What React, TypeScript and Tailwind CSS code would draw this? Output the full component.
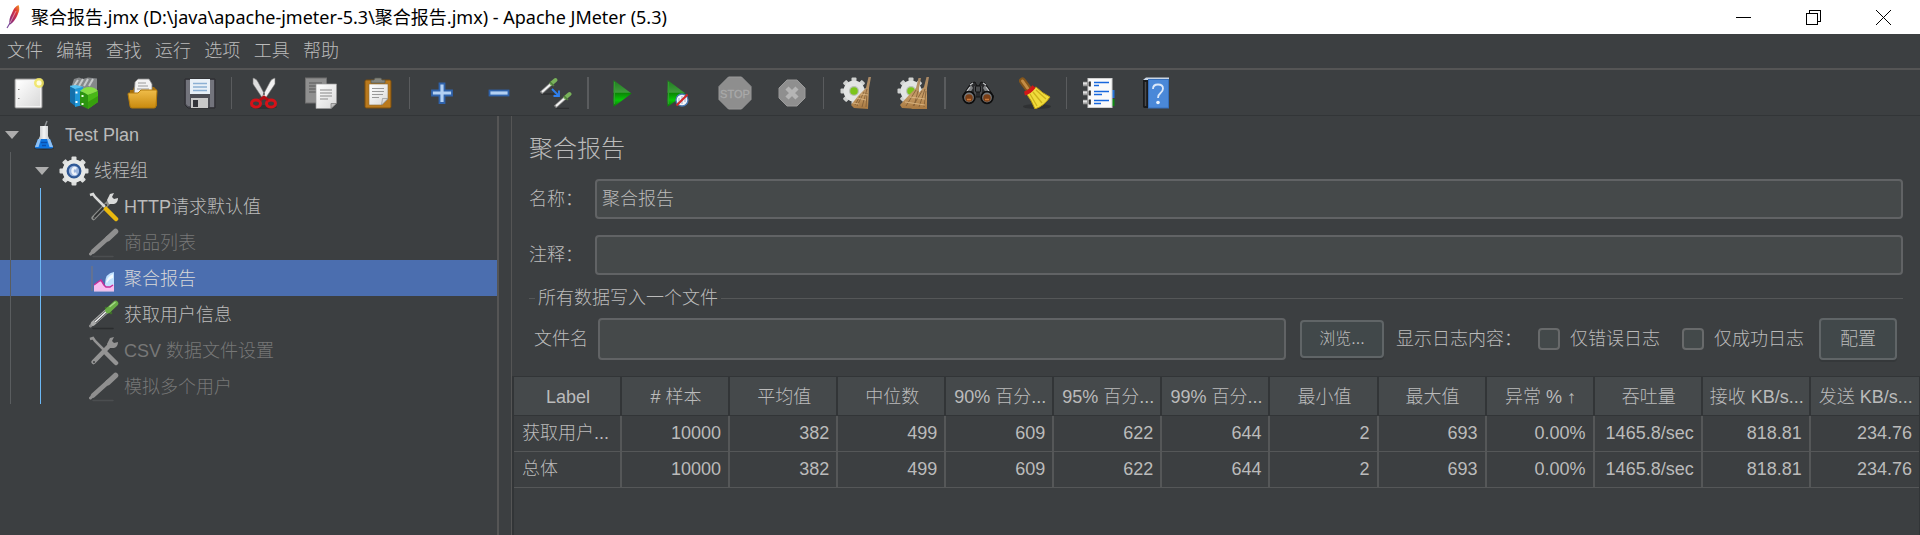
import React from "react";

type IconProps = { children: React.ReactNode; size?: string; box?: string };

function Icon({ children, size = "size-8", box = "0 0 32 32" }: IconProps) {
  return (
    <svg viewBox={box} className={`${size} shrink-0`} fill="none" aria-hidden="true">
      {children}
    </svg>
  );
}

function Gradients() {
  return (
    <svg className="absolute size-0" aria-hidden="true">
      <defs>
        <linearGradient id="paper" x1="0" y1="0" x2="1" y2="1">
          <stop offset="0" stopColor="#fff" />
          <stop offset="1" stopColor="#d9d9d9" />
        </linearGradient>
        <linearGradient id="gold" x1="0" y1="0" x2="0" y2="1">
          <stop offset="0" stopColor="#f0bd4a" />
          <stop offset="1" stopColor="#c98a0e" />
        </linearGradient>
        <linearGradient id="play" x1="0" y1="0" x2="0" y2="1">
          <stop offset="0" stopColor="#1d7c1d" />
          <stop offset="0.45" stopColor="#3f9a3c" />
          <stop offset="0.5" stopColor="#0a8a05" />
          <stop offset="0.75" stopColor="#08c808" />
          <stop offset="1" stopColor="#0f6d0c" />
        </linearGradient>
        <linearGradient id="straw" x1="0" y1="0" x2="0" y2="1">
          <stop offset="0" stopColor="#a88865" />
          <stop offset="0.6" stopColor="#c59a63" />
          <stop offset="1" stopColor="#a87840" />
        </linearGradient>
        <linearGradient id="quill" x1="1" y1="0" x2="0" y2="1">
          <stop offset="0" stopColor="#f59a23" />
          <stop offset="0.35" stopColor="#d9333a" />
          <stop offset="0.7" stopColor="#a22a6b" />
          <stop offset="1" stopColor="#6b3a8c" />
        </linearGradient>
        <linearGradient id="glass" x1="0" y1="0" x2="1" y2="0">
          <stop offset="0" stopColor="#9b9fa3" />
          <stop offset="0.5" stopColor="#f4f5f6" />
          <stop offset="1" stopColor="#a7abaf" />
        </linearGradient>
      </defs>
    </svg>
  );
}

const NewIcon = () => (
  <Icon>
    <rect x="2" y="2" width="27" height="29" rx="1" fill="#f4f4f4" stroke="#8e8e8e" />
    <rect x="4" y="4" width="23" height="25" fill="url(#paper)" />
    <path d="M5 12.500h1.500M5 21.500h1.500" stroke="#888" />
    <circle cx="26" cy="6" r="5" fill="#f1e55c" fillOpacity="0.85" />
    <circle cx="26" cy="6" r="2.500" fill="#fffde0" />
  </Icon>
);

const TemplatesIcon = () => (
  <Icon>
    <path d="M1 11L4 2l5-1.500 4 1.500 5-1.500 9 1v16H3z" fill="#85888a" />
    <path d="M4 9l4-6M9 9l4-7M14 9l4-7M19 9l4-7" stroke="#c6c9ca" strokeWidth="2" />
    <path d="M-1 9l6 2v18l-5-4z" fill="#1470ab" />
    <path d="M-1 9l7-1 8 2-9 2z" fill="#58c3f3" />
    <path d="M5 12l8-2v18l-8 2z" fill="#2098d8" />
    <path d="M6.500 14.500v2M6.500 24v2" stroke="#fff" strokeWidth="2" />
    <path d="M10 14l8 3v15l-8-4z" fill="#2c9410" />
    <path d="M10 14q4-4 9-4 6 0 9 4l-10 4q-4-3-8-4z" fill="#86df45" />
    <path d="M18 18l10-4v11l-10 7z" fill="#48b816" />
    <path d="M18 25l10-6v6l-10 7z" fill="#37a00d" />
    <path d="M12.500 18v2M12.500 26v2" stroke="#e9ffe0" strokeWidth="2" />
  </Icon>
);

const OpenIcon = () => (
  <Icon>
    <path d="M3 13h3l1-3h20l3 3v16H3z" fill="#a46d0a" />
    <path d="M8 5l3-3h11l3 5v11H7z" fill="#f2f2f2" stroke="#888" strokeWidth="0.800" />
    <path d="M11 6h8M11 9h10M10 12h12" stroke="#999" strokeWidth="1.200" />
    <path d="M1 17q0-1 1-1h9l3-3h15q1 0 1 1l-1 15q0 2-2 2H5q-2 0-2-2z" fill="url(#gold)" stroke="#b27a0c" />
  </Icon>
);

const SaveIcon = () => (
  <Icon>
    <path d="M1 2h30v29H4l-3-3z" fill="#4c4d54" stroke="#2a2b2e" />
    <path d="M2 3h4v26H4l-2-2zM26 3h4v27h-4z" fill="#73747c" />
    <rect x="6" y="2" width="20" height="15" fill="#e8f0f7" />
    <path d="M9 6.500h14M9 10h14M9 13.500h14" stroke="#8bb0d4" strokeWidth="1.500" />
    <rect x="7" y="21" width="17" height="10" fill="#c9c9c9" />
    <rect x="9" y="23" width="5" height="7" fill="#33343a" />
  </Icon>
);

const CutIcon = () => (
  <Icon>
    <ellipse cx="16" cy="30" rx="13" ry="2" fill="#26282a" fillOpacity="0.600" />
    <path d="M5 1q4 1 5 4l8 15-3 2L5 7z" fill="#dedede" stroke="#777" strokeWidth="0.600" />
    <path d="M27 1q-4 1-5 4l-8 15 3 2L27 7z" fill="#f1f1f1" stroke="#777" strokeWidth="0.600" />
    <ellipse cx="8" cy="26.500" rx="4.500" ry="3.500" stroke="#d71118" strokeWidth="3" />
    <ellipse cx="23" cy="26.500" rx="4.500" ry="3.500" stroke="#d71118" strokeWidth="3" />
    <path d="M12 23l4-3 4 3" stroke="#b40d12" strokeWidth="3" />
    <circle cx="16" cy="17" r="1" fill="#555" />
  </Icon>
);

const CopyIcon = () => (
  <Icon>
    <rect x="0.500" y="1" width="21" height="25" fill="#8f8f8f" stroke="#6f6f6f" />
    <path d="M4 6h13M4 9h13M4 12h8M4 15h8" stroke="#6c6c6c" strokeWidth="1.300" />
    <path d="M11 7h20.500v19l-5.500 5.500H11z" fill="url(#paper)" stroke="#999" strokeWidth="0.700" />
    <path d="M15 13h12M15 16h12M15 19h12M15 22h8" stroke="#aaa" strokeWidth="1.300" />
    <path d="M26 31.500v-5h5.500z" fill="#bdbdbd" stroke="#777" strokeWidth="0.700" />
  </Icon>
);

const PasteIcon = () => (
  <Icon>
    <rect x="3" y="3" width="26" height="28" rx="1.500" fill="#b9791d" stroke="#7d4f0c" />
    <path d="M7 7h19v15l-6 6H7z" fill="url(#paper)" stroke="#8a6b3a" strokeWidth="0.600" />
    <path d="M10 11.500h12M10 14.500h12M10 17.500h11M10 20.500h7" stroke="#999" strokeWidth="1.200" />
    <path d="M19.500 28l1-6.500h5.500z" fill="#ddd" stroke="#888" strokeWidth="0.600" />
    <path d="M9 6V3h3l1-2h6l1 2h3v3z" fill="#85867f" stroke="#55564f" strokeWidth="0.700" />
  </Icon>
);

const PlusIcon = () => (
  <Icon>
    <path d="M13.500 6.500h5v7h7.500v5h-7.500V26h-5v-7.500H6v-5h7.500z" fill="#b3d0f2" stroke="#2f62aa" strokeWidth="1.800" />
  </Icon>
);

const MinusIcon = () => (
  <Icon>
    <rect x="6.500" y="13.500" width="19" height="5" fill="#b3d0f2" stroke="#2f62aa" strokeWidth="1.800" />
  </Icon>
);

const ToggleIcon = () => (
  <Icon>
    <path d="M1 17h13M16 31.500h13" stroke="#2d2f31" strokeWidth="1.500" />
    <path d="M1 16l10-9" stroke="#8a8a8a" strokeWidth="3.500" />
    <path d="M2 15l9-8" stroke="#f4f4f4" strokeWidth="1.800" />
    <path d="M11.500 6.500L15.500 3" stroke="#79b25a" strokeWidth="4" strokeLinecap="round" />
    <path d="M10 5l4 4" stroke="#4f7d3a" strokeWidth="1.500" />
    <path d="M15 30l10-9" stroke="#8a8a8a" strokeWidth="3.500" />
    <path d="M16 29l9-8" stroke="#f4f4f4" strokeWidth="1.800" />
    <path d="M25.500 20.500L29.500 17" stroke="#79b25a" strokeWidth="4" strokeLinecap="round" />
    <path d="M24 19l4 4" stroke="#4f7d3a" strokeWidth="1.500" />
    <path d="M12 12l6 6" stroke="#2f80f0" strokeWidth="1.800" />
    <path d="M19 13.500v5.500h-5.500" stroke="#2f80f0" strokeWidth="1.800" />
  </Icon>
);

const PlayIcon = () => (
  <Icon>
    <path d="M8.500 3v27L26.500 16.500z" fill="url(#play)" />
    <path d="M9.500 5v22" stroke="#2fa02c" />
  </Icon>
);

const PlayNoPauseIcon = () => (
  <Icon>
    <path d="M5.500 3v27L23.500 16.500z" fill="url(#play)" />
    <path d="M6.500 5v22" stroke="#2fa02c" />
    <circle cx="20" cy="23" r="6" fill="#f4f6fa" stroke="#4a7bb5" strokeWidth="1.300" />
    <path d="M17 21v5M20 19v8M23 20v5" stroke="#a8bbd4" strokeWidth="1.200" />
    <path d="M14.500 28.500l11-11" stroke="#d02a2a" strokeWidth="2.200" />
  </Icon>
);

const StopIcon = () => (
  <Icon size="size-[34px]" box="0 0 34 34">
    <path d="M10.500 1h13L33 10.500v13L23.500 33h-13L1 23.500v-13z" fill="#8e8e8e" stroke="#999" />
    <text x="17" y="21.500" textAnchor="middle" className="font-['Liberation_Sans'] text-[11px] font-normal" fill="#a9a9a9" stroke="#a9a9a9" strokeWidth="0.300">
      STOP
    </text>
  </Icon>
);

const ShutdownIcon = () => (
  <Icon>
    <path d="M11 3h10l8 8v10l-8 8H11l-8-8V11z" fill="#8f8f8f" stroke="#9a9a9a" />
    <path d="M11 11l10 10M21 11L11 21" stroke="#b5b5b5" strokeWidth="4.500" />
  </Icon>
);

const gearTeeth = [0, 45, 90, 135, 180, 225, 270, 315];

function SmallGear() {
  return (
    <g>
      {gearTeeth.map((a) => (
        <rect key={a} x="11.500" y="0.500" width="5" height="7" rx="1" fill="#cfd1d0" transform={`rotate(${a} 14 14)`} />
      ))}
      <circle cx="14" cy="14" r="10.500" fill="#e2e4e3" />
      <circle cx="14" cy="14" r="5" fill="#b9bfb6" />
      <circle cx="14" cy="14" r="3.800" fill="#7cc41c" />
    </g>
  );
}

const ClearIcon = () => (
  <Icon>
    <SmallGear />
    <path d="M28.500 0H31l-2 11-1 21-14-1-3-3 7-9 8-8z" fill="url(#straw)" />
    <path d="M27 12l-5 18M24 15l-7 14M27 16l-1 14M20 19l-5 9" stroke="#7d5a33" strokeWidth="0.800" />
    <path d="M13 26l6 1M17 21l9 2M21 17l7 1" stroke="#e0bd8a" strokeWidth="0.800" />
  </Icon>
);

const ClearAllIcon = () => (
  <Icon>
    <SmallGear />
    <path d="M21.500 1H24l-2 10v21L5 31l-2-3 9-10 7-7z" fill="url(#straw)" />
    <path d="M29.500 0H32l-2 11v21H15l-3-4 8-10 7-8z" fill="url(#straw)" />
    <path d="M19 13L9 29M28 12l-6 18M25 14l-9 15M21 14l-4 15M29 14l-2 16" stroke="#7d5a33" strokeWidth="0.800" />
    <path d="M8 25l20 3M13 20l15 2" stroke="#e0bd8a" strokeWidth="0.800" />
  </Icon>
);

const SearchIcon = () => (
  <Icon>
    <path d="M0 20L5 12l4-6 4-1 2 4h2l2-4 4 1 4 6 5 8z" fill="#2a2b2d" stroke="#151617" />
    <path d="M4 15l5-7 2 3-3 5zM28 15l-5-7-2 3 3 5z" fill="#7f8183" />
    <path d="M8 8l3-2M24 8l-3-2M5 14l3-4M27 14l-3-4" stroke="#c3c5c7" strokeWidth="1.200" />
    <path d="M13 9v12M19 9v12" stroke="#55575a" strokeWidth="1.500" />
    <circle cx="7" cy="20.500" r="5.800" fill="#77797b" stroke="#0d0d0d" strokeWidth="1.800" />
    <circle cx="25" cy="20.500" r="5.800" fill="#77797b" stroke="#0d0d0d" strokeWidth="1.800" />
    <circle cx="7" cy="21" r="3.800" fill="#7a3f17" />
    <circle cx="25" cy="21" r="3.800" fill="#7a3f17" />
    <path d="M5 22.500h4M23 22.500h4" stroke="#c9793a" strokeWidth="1.500" />
    <rect x="13.500" y="9" width="5" height="6" rx="1" fill="#4a4c4e" stroke="#121313" />
  </Icon>
);

const BroomIcon = () => (
  <Icon>
    <ellipse cx="18" cy="29.500" rx="14" ry="2.500" fill="#26282a" fillOpacity="0.600" />
    <path d="M3.500 4l6 8" stroke="#84561c" strokeWidth="7" strokeLinecap="round" />
    <path d="M3.500 4l5 7" stroke="#c48d45" strokeWidth="3" strokeLinecap="round" />
    <path d="M7 16l10-6q6 6 14 10-6 9-15 12-3-8-9-16z" fill="#f0dc3c" stroke="#b99a10" />
    <path d="M11 17l7 12M14 15l9 11M17 13l10 9" stroke="#cdb21c" strokeWidth="1.300" />
    <path d="M5.500 16.500q5-1 9.500-7" stroke="#d01818" strokeWidth="4" />
  </Icon>
);

const FunctionIcon = () => (
  <Icon>
    <path d="M28 13h3.500v8H28z" fill="#2573d9" />
    <path d="M28 22h3.500v7H28z" fill="#0c8a12" />
    <rect x="5" y="1.500" width="24" height="29" fill="#fafafa" stroke="#cfcfcf" />
    <path d="M0 7h7M0 16h7M0 25h7" stroke="#9a9a9a" strokeWidth="4.500" />
    <path d="M0 6.500h4M0 15.500h4M0 24.500h4" stroke="#e0e0e0" strokeWidth="2" />
    <path d="M7 4.500v5M7 13.500v5M7 22.500v5" stroke="#111" strokeWidth="1.500" />
    <path d="M11 5.500h15M11 8.500h5M11 14.500h15M11 17.500h8M11 23.500h15M11 26.500h7" stroke="#1767dd" strokeWidth="1.700" />
  </Icon>
);

const HelpIcon = () => (
  <Icon>
    <path d="M3 3l3-2.500h23V3z" fill="#c9d6e6" />
    <path d="M3 3h6v28H4l-1-1z" fill="#191a1b" />
    <path d="M5.500 5v24" stroke="#4a4b4d" strokeWidth="1.500" />
    <rect x="8.500" y="2.500" width="20" height="28.500" fill="#4a88d8" stroke="#356fbc" />
    <path d="M13 12q0-4.500 5-4.500t5 4q0 2.500-2.500 4.500t-2.500 5" stroke="#dbe8f9" strokeWidth="1.800" />
    <circle cx="18" cy="25.500" r="1.800" fill="#eaf2fc" />
  </Icon>
);

const toolbar: { label: string; icon: React.ReactNode; disabled?: boolean }[][] = [
  [
    { label: "新建", icon: <NewIcon /> },
    { label: "模板", icon: <TemplatesIcon /> },
    { label: "打开", icon: <OpenIcon /> },
    { label: "保存", icon: <SaveIcon /> },
  ],
  [
    { label: "剪切", icon: <CutIcon /> },
    { label: "复制", icon: <CopyIcon /> },
    { label: "粘贴", icon: <PasteIcon /> },
  ],
  [
    { label: "全部展开", icon: <PlusIcon /> },
    { label: "全部折叠", icon: <MinusIcon /> },
    { label: "切换", icon: <ToggleIcon /> },
  ],
  [
    { label: "启动", icon: <PlayIcon /> },
    { label: "不停顿开始", icon: <PlayNoPauseIcon /> },
    { label: "停止", icon: <StopIcon />, disabled: true },
    { label: "关闭", icon: <ShutdownIcon />, disabled: true },
  ],
  [
    { label: "清除", icon: <ClearIcon /> },
    { label: "清除全部", icon: <ClearAllIcon /> },
  ],
  [
    { label: "查找", icon: <SearchIcon /> },
    { label: "重置搜索", icon: <BroomIcon /> },
  ],
  [
    { label: "函数助手", icon: <FunctionIcon /> },
    { label: "帮助", icon: <HelpIcon /> },
  ],
];

const treeIcon = "size-[30px]";

const FlaskIcon = () => (
  <Icon size={treeIcon} box="0 0 30 30">
    <ellipse cx="14" cy="28.500" rx="10" ry="1.500" fill="#2c2e30" />
    <path d="M15 6l2-5" stroke="#8f9396" strokeWidth="1.500" />
    <path d="M10 6h8v10l5 11q0 1-1 1H6q-1 0-1-1l5-11z" fill="url(#glass)" />
    <path d="M8 19h12l3 8q0 1.500-1.500 1.500H6.500Q5 28.500 5 27z" fill="#0e74e0" />
    <path d="M8 19h3l-2.500 8H5zM20 19l3 8h-3.500l-2.500-8z" fill="#8fc0f2" />
    <path d="M11 22.500h6M12 25.500h4" stroke="#0a4fae" strokeWidth="1.500" />
  </Icon>
);

const ThreadGroupIcon = () => (
  <Icon size={treeIcon} box="0 0 30 30">
    {gearTeeth.map((a) => (
      <rect key={a} x="12.500" y="0.500" width="5" height="7" rx="1" fill="#dcdedd" transform={`rotate(${a} 15 15)`} />
    ))}
    <circle cx="15" cy="15" r="11.500" fill="#e6e8e7" />
    <circle cx="15" cy="15" r="6.300" fill="#9db6de" stroke="#2f5896" strokeWidth="2.300" />
    <path d="M17.500 12.500q-4-1.500-4 2.500t4 2.500" stroke="#eef3fa" strokeWidth="2.500" />
  </Icon>
);

function ToolsIcon({ muted = false }: { muted?: boolean }) {
  const steel = muted ? "#949494" : "#d9dad9";
  const grip = muted ? "#949494" : "#eab90e";
  return (
    <Icon size={treeIcon} box="0 0 30 30">
      <path d="M4.500 26L20 10" stroke={muted ? "#949494" : "#8a8c8a"} strokeWidth="4.500" strokeLinecap="round" />
      {!muted && <path d="M6 24.500L17 13" stroke="#2e3031" strokeWidth="2" strokeLinecap="round" />}
      <path d="M20 12l-2-4 3-6 4-1-2 4 2 2 4-1q0 5-4 6z" fill={steel} />
      <path d="M1 3l3-1 2 3 10 10" stroke={steel} strokeWidth="2.500" />
      <path d="M17 17l10 10" stroke={grip} strokeWidth="4.500" strokeLinecap="round" />
      <circle cx="5" cy="26" r="1" fill="#3c3f41" />
    </Icon>
  );
}

function SamplerIcon({ muted = false }: { muted?: boolean }) {
  return (
    <Icon size={treeIcon} box="0 0 30 30">
      <path d="M4 28.500h20" stroke={muted ? "#4b4e50" : "#2b2d2f"} strokeWidth="1.500" strokeLinecap="round" />
      <path d="M1.500 26l3-3" stroke="#8f8f8f" strokeWidth="3" strokeLinecap="round" />
      <path d="M4 23.500L19 10" stroke={muted ? "#8f8f8f" : "#a9aaa9"} strokeWidth="4.500" strokeLinecap="round" />
      {!muted && <path d="M6 22L17 12" stroke="#3a3c3d" strokeWidth="2.800" />}
      {!muted && <path d="M6 22L18 11" stroke="#f2f2f2" strokeWidth="1.600" />}
      {!muted && <path d="M17 8l5 5" stroke="#3f6f2a" strokeWidth="2.500" strokeLinecap="round" />}
      <path d="M19 10.500l7.500-7" stroke={muted ? "#8f8f8f" : "#6aae46"} strokeWidth="5.500" strokeLinecap="round" />
      {!muted && <path d="M21 6.500l5-4" stroke="#a7d98a" strokeWidth="1.500" strokeLinecap="round" />}
    </Icon>
  );
}

const ReportIcon = () => (
  <Icon size={treeIcon} box="0 0 30 30">
    <path d="M3 2v25" stroke="#66738f" strokeWidth="1.800" />
    <path d="M16 20q0-11 9-12v17l-9 1z" fill="#bfe0ff" />
    <path d="M17 18q2-6 7-8v4q-4 1-6 5z" fill="#f1f8ff" />
    <path d="M5 27v-6l4-3 3-2 3 5 4 2 6-3v7z" fill="#f9bdf0" />
    <path d="M5 21l4-3 3-2 3 5 2 2 4 0 3-2" stroke="#c4309c" strokeWidth="1.500" />
    <path d="M5 27h20" stroke="#e3c3e8" strokeWidth="1.200" />
  </Icon>
);

function Arrow() {
  return (
    <svg viewBox="0 0 14 8" className="h-2 w-3.5 shrink-0" aria-hidden="true">
      <path d="M0 0h14L7 8z" fill="#adadad" />
    </svg>
  );
}

const leaves: { text: string; icon: React.ReactNode; state?: "off" | "selected" }[] = [
  { text: "HTTP请求默认值", icon: <ToolsIcon /> },
  { text: "商品列表", icon: <SamplerIcon muted />, state: "off" },
  { text: "聚合报告", icon: <ReportIcon />, state: "selected" },
  { text: "获取用户信息", icon: <SamplerIcon /> },
  { text: "CSV 数据文件设置", icon: <ToolsIcon muted />, state: "off" },
  { text: "模拟多个用户", icon: <SamplerIcon muted />, state: "off" },
];

const leafStyle = {
  normal: "",
  off: "text-[#777777]",
  selected: "bg-[#4b6eaf] text-[#d8d8d8]",
};

const treeRow = "flex h-9 items-center pt-0.5";

function Tree() {
  return (
    <nav aria-label="测试计划" className="w-[499px] shrink-0 border-r-2 border-[#555555]">
      <div className={`${treeRow} pl-[5px]`}>
        <Arrow />
        <span className="flex items-center gap-[5px] pl-[11px]">
          <FlaskIcon />
          Test Plan
        </span>
      </div>
      <div className="relative">
        <div className={`${treeRow} pl-[35px]`}>
          <Arrow />
          <span className="flex items-center gap-[5px] pl-[10px]">
            <ThreadGroupIcon />
            线程组
          </span>
        </div>
        <div className="relative">
          <ul>
            {leaves.map((leaf) => (
              <li key={leaf.text} className={`${treeRow} gap-[5px] pl-[89px] ${leafStyle[leaf.state ?? "normal"]}`}>
                {leaf.icon}
                {leaf.text}
              </li>
            ))}
          </ul>
          <span className="absolute inset-y-0 left-10 w-px bg-[#6cb8f5]" />
        </div>
        <span className="absolute inset-y-0 left-2.5 w-px bg-[#5a5d5f]" />
      </div>
    </nav>
  );
}

const columns = ["Label", "# 样本", "平均值", "中位数", "90% 百分...", "95% 百分...", "99% 百分...", "最小值", "最大值", "异常 % ↑", "吞吐量", "接收 KB/s...", "发送 KB/s..."];

const rows = [
  ["获取用户...", "10000", "382", "499", "609", "622", "644", "2", "693", "0.00%", "1465.8/sec", "818.81", "234.76"],
  ["总体", "10000", "382", "499", "609", "622", "644", "2", "693", "0.00%", "1465.8/sec", "818.81", "234.76"],
];

function ResultTable() {
  return (
    <div className="flex-1 border-r border-l-2 border-[#323537]">
      <table className="w-full table-fixed border-separate border-spacing-0">
        <thead>
          <tr>
            {columns.map((c) => (
              <th key={c} scope="col" className="h-10 border-y border-r-2 border-[#323537] bg-[#45494b] pt-0.5 pr-0 pb-0 pl-0.5 text-center font-light whitespace-nowrap last:border-r-0">
                {c}
              </th>
            ))}
          </tr>
        </thead>
        <tbody>
          {rows.map((row) => (
            <tr key={row[0]}>
              {row.map((cell, i) => (
                <td key={i} className="h-9 border-r-2 border-b border-[#555758] pt-0 pr-[7px] pb-0.5 pl-2 text-right whitespace-nowrap first:pr-0 first:text-left last:border-r-0">
                  {cell}
                </td>
              ))}
            </tr>
          ))}
        </tbody>
      </table>
    </div>
  );
}

const field = "min-w-0 flex-1 rounded-[4px] border-2 border-[#616365] bg-[#45494a] px-[5px] outline-none";
const button = "shrink-0 rounded-[4px] border-2 border-[#606567] bg-[#41484a] text-center shadow-[0_2px_0_#35383a]";
const check = "size-[22px] shrink-0 appearance-none rounded-[4px] border-2 border-[#686a6b] bg-[#43494a] checked:bg-[#4b6eaf]";

function ReportPanel() {
  return (
    <main className="ml-3 flex min-w-0 flex-1 flex-col border-l border-[#555555]">
      <div className="flex flex-col pt-4 pr-[17px] pb-4 pl-[17px]">
        <h1 className="text-2xl leading-[34px]">聚合报告</h1>
        <div className="mt-[13px] flex h-10 items-stretch">
          <label htmlFor="name" className="w-[66px] shrink-0 leading-10">名称：</label>
          <input id="name" defaultValue="聚合报告" className={field} />
        </div>
        <div className="mt-4 flex h-10 items-stretch">
          <label htmlFor="comment" className="w-[66px] shrink-0 leading-10">注释：</label>
          <input id="comment" className={field} />
        </div>
        <fieldset className="mt-[11px] min-w-0 border-t border-[#555758]">
          <legend className="ml-[6px] px-[3px] leading-6">所有数据写入一个文件</legend>
          <div className="mt-2 flex items-center pr-1.5 pl-[5px]">
            <label htmlFor="file" className="shrink-0 pr-[10px]">文件名</label>
            <input id="file" className={`h-[42px] ${field}`} />
            <button type="button" className={`mr-3 ml-3.5 h-[38px] w-[84px] text-base ${button}`}>浏览...</button>
            <span className="shrink-0 pr-4">显示日志内容：</span>
            <label className="mr-[22px] flex shrink-0 items-center gap-[10px]">
              <input type="checkbox" className={check} />
              仅错误日志
            </label>
            <label className="mr-[15px] flex shrink-0 items-center gap-[10px]">
              <input type="checkbox" className={check} />
              仅成功日志
            </label>
            <button type="button" className={`h-[42px] w-[78px] ${button}`}>配置</button>
          </div>
        </fieldset>
      </div>
      <ResultTable />
    </main>
  );
}

const windowButton = "flex w-[70px] items-center justify-center";

function TitleBar() {
  return (
    <header className="flex h-[34px] items-stretch bg-white pr-0.5 text-black">
      <div className="flex flex-1 items-center gap-[10px] pl-1.5 font-['Noto_Sans','Noto_Sans_CJK_SC',sans-serif] text-lg font-normal">
        <svg viewBox="0 0 15 24" className="h-6 w-[15px]" aria-hidden="true">
          <path d="M12.500 0q2 4-1 10-3 7-8 10-1-6 2.500-12Q8 2 12.500 0z" fill="url(#quill)" />
          <path d="M1 23L4 18" stroke="#7c4a9a" strokeWidth="1.200" />
          <path d="M4 18L10 6" stroke="#f3b9c4" strokeWidth="0.700" />
        </svg>
        <span>聚合报告.jmx (D:\java\apache-jmeter-5.3\聚合报告.jmx) - Apache JMeter (5.3)</span>
      </div>
      <button type="button" aria-label="最小化" className={windowButton}>
        <svg viewBox="0 0 15 15" className="size-[15px]" shapeRendering="crispEdges"><path d="M0 7h15v1H0z" /></svg>
      </button>
      <button type="button" aria-label="还原" className={windowButton}>
        <svg viewBox="0 0 15 15" className="size-[15px]" fill="none" stroke="#000" shapeRendering="crispEdges">
          <path d="M.5 3.500h11v11H.5zM3.500 3.500v-3h11v11h-3" />
        </svg>
      </button>
      <button type="button" aria-label="关闭窗口" className={windowButton}>
        <svg viewBox="0 0 15 15" className="size-[15px]" fill="none" stroke="#000"><path d="M0 0l15 15M15 0L0 15" /></svg>
      </button>
    </header>
  );
}

const menus = ["文件", "编辑", "查找", "运行", "选项", "工具", "帮助"];

export default function App() {
  return (
    <div className="flex min-h-screen flex-col bg-[#3c3f41] font-['Liberation_Sans','Noto_Sans_CJK_SC',sans-serif] text-lg font-light text-[#bbbbbb]">
      <Gradients />
      <TitleBar />
      <nav aria-label="菜单" className="flex h-9 border-b-2 border-[#555555] pl-[7px]">
        <div className="flex w-[332px] justify-between">
          {menus.map((m) => (
            <button key={m} type="button">{m}</button>
          ))}
        </div>
      </nav>
      <div role="toolbar" aria-label="工具栏" className="flex h-[46px] items-center border-b border-[#323537]">
        {toolbar.map((group, g) => (
          <React.Fragment key={g}>
            {g > 0 && <span className={`mx-[3px] h-8 bg-[#5a5c5e] ${g === 3 || g === 5 ? "w-0.5" : "w-px"}`} />}
            {group.map((t) => (
              <button key={t.label} type="button" aria-label={t.label} disabled={t.disabled} className="flex w-[57px] justify-center">
                {t.icon}
              </button>
            ))}
          </React.Fragment>
        ))}
      </div>
      <div className="flex flex-1 items-stretch">
        <Tree />
        <ReportPanel />
      </div>
    </div>
  );
}
